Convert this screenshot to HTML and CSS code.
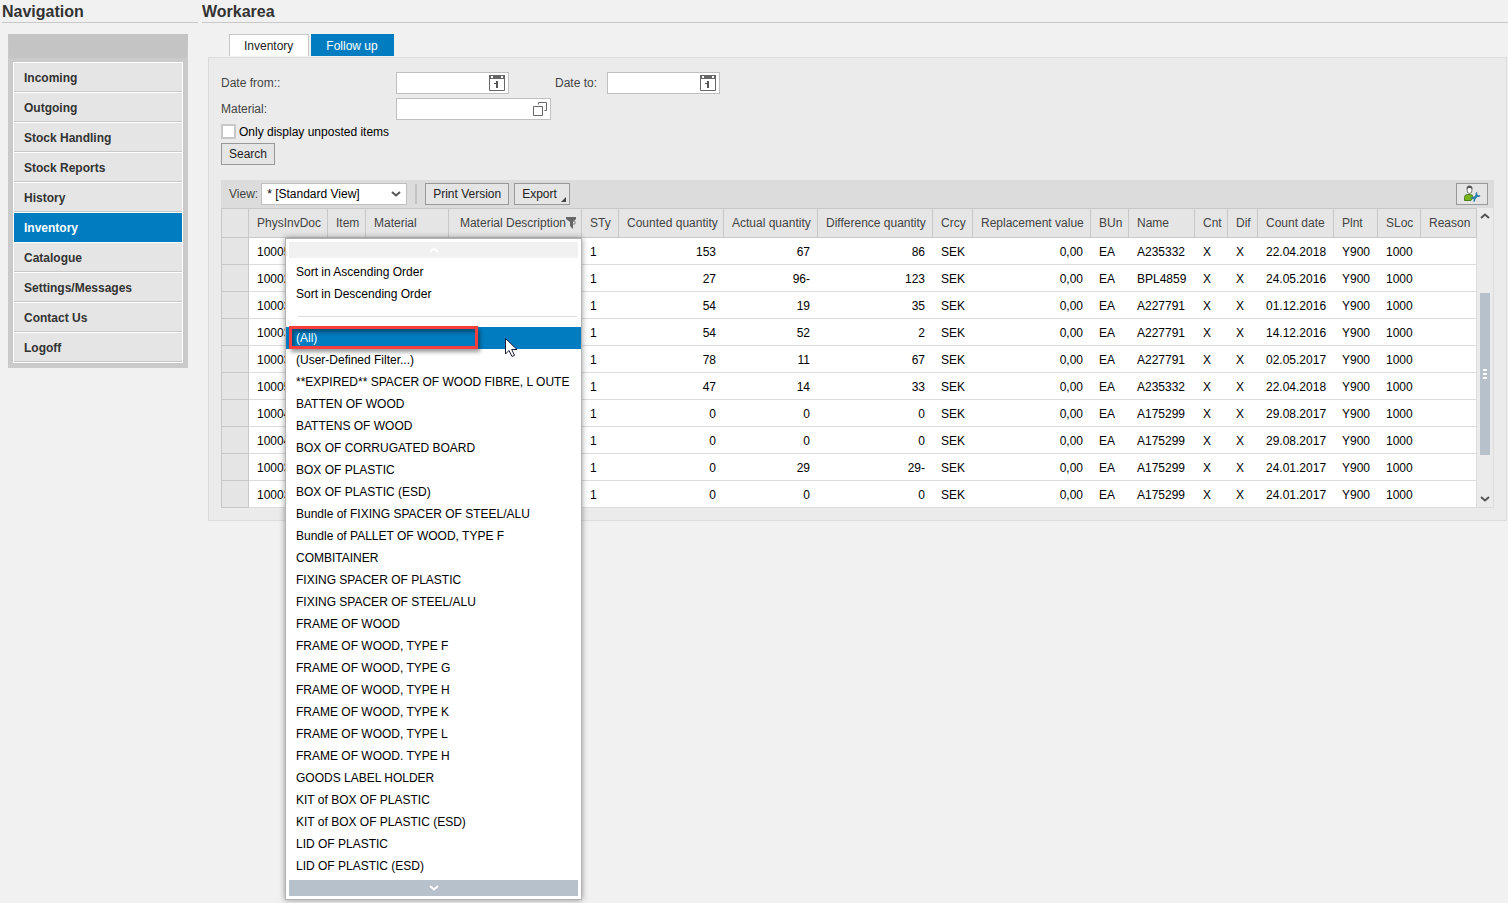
FILE: index.html
```html
<!DOCTYPE html>
<html lang="en">
<head>
<meta charset="UTF-8" />
<title>Inventory - Follow up</title>
<link rel="stylesheet" href="styles.css">
</head>
<body>
<div class="page">

<aside class="sidebar">
  <h2>Navigation</h2>
  <nav class="nav-box">
    <ul>
      <li><a href="#">Incoming</a></li>
      <li><a href="#">Outgoing</a></li>
      <li><a href="#">Stock Handling</a></li>
      <li><a href="#">Stock Reports</a></li>
      <li><a href="#">History</a></li>
      <li class="active"><a href="#">Inventory</a></li>
      <li><a href="#">Catalogue</a></li>
      <li><a href="#">Settings/Messages</a></li>
      <li><a href="#">Contact Us</a></li>
      <li><a href="#">Logoff</a></li>
    </ul>
  </nav>
</aside>

<main class="workarea">
  <h2>Workarea</h2>

  <div class="tabs">
    <button type="button" class="tab">Inventory</button>
    <button type="button" class="tab selected">Follow up</button>
  </div>

  <div class="panel">
    <!-- Search form -->
    <form class="search" onsubmit="return false;">
      <div class="fields">
        <label for="dateFrom">Date from::</label>
        <div class="field date">
          <input type="text" id="dateFrom">
          <svg width="16" height="16" viewBox="0 0 16 16"><path d="M.5 .5h15v15H.5z" fill="#fff" stroke="#666"/><path d="M0 0h16v4H0z" fill="#666"/><path d="M2 1h2v2H2zM12 1h2v2h-2z" fill="#fff"/><path d="M7 6h2v7H7zM5 8h2v1H5z" fill="#555"/></svg>
        </div>
        <label for="dateTo">Date to:</label>
        <div class="field date">
          <input type="text" id="dateTo">
          <svg width="16" height="16" viewBox="0 0 16 16"><path d="M.5 .5h15v15H.5z" fill="#fff" stroke="#666"/><path d="M0 0h16v4H0z" fill="#666"/><path d="M2 1h2v2H2zM12 1h2v2h-2z" fill="#fff"/><path d="M7 6h2v7H7zM5 8h2v1H5z" fill="#555"/></svg>
        </div>
        <label for="material">Material:</label>
        <div class="field wide">
          <input type="text" id="material">
          <svg width="16" height="16" viewBox="0 0 16 16"><path d="M1.500 5.500h9v9h-9zM6.500 3.500v-2h8v8h-2" fill="none" stroke="#666"/></svg>
        </div>
      </div>
      <div class="check">
        <input type="checkbox" id="unposted">
        <label for="unposted">Only display unposted items</label>
      </div>
      <button type="submit" class="btn">Search</button>
    </form>

    <!-- Table toolbar -->
    <div class="toolbar">
      <label for="view">View:</label>
      <div class="view-select">
        <select id="view"><option>* [Standard View]</option></select>
        <svg width="10" height="6" viewBox="0 0 10 6"><path d="M1 1l4 3.500L9 1" fill="none" stroke="#555" stroke-width="2"/></svg>
      </div>
      <span class="divider"></span>
      <button type="button" class="btn">Print Version</button>
      <button type="button" class="btn export">Export<svg width="5" height="5" viewBox="0 0 5 5"><path d="M5 0v5H0z" fill="#444"/></svg></button>
      <button type="button" class="btn settings" aria-label="Settings">
        <svg width="18" height="18" viewBox="0 0 18 18">
          <path d="M1.500 15.500v-3q0-3 3-3h3q2.500 0 2.500 3l-2 3z" fill="#79b51c" stroke="#4a7f1b"/>
          <ellipse cx="6.500" cy="5" rx="2.500" ry="3.500" fill="#fff" stroke="#777"/>
          <path d="M3.500 4q0-3.500 3-3.500t3 3.500q-3-2-6 0z" fill="#555"/>
          <path d="M10.500 14l4-4" stroke="#2d7fae" stroke-width="2.500"/>
          <path d="M14 7.500a2 2 0 1 0 3 3M8 13.500a2 2 0 1 1 2.500 3" fill="none" stroke="#2d7fae" stroke-width="1.500"/>
        </svg>
      </button>
    </div>

    <div class="grid">
      <table>
        <colgroup>
          <col class="w-sel"><col class="w-doc"><col class="w-item"><col class="w-mat"><col class="w-desc">
          <col class="w-sty"><col class="w-counted"><col class="w-actual"><col class="w-diff"><col class="w-crcy">
          <col class="w-value"><col class="w-bun"><col class="w-name"><col class="w-cnt"><col class="w-dif">
          <col class="w-date"><col class="w-plnt"><col class="w-sloc"><col>
        </colgroup>
        <thead>
          <tr>
            <th></th><th>PhysInvDoc</th><th>Item</th><th>Material</th>
            <th class="filtered">
              <div class="head">Material Description<svg width="10" height="12" viewBox="0 0 10 12"><path d="M0 0h10v2L7 5v7L4 9V5L0 2z" fill="#666"/><path d="M7 4h2v3H7" fill="none" stroke="#888"/></svg></div>
              <!-- Filter menu -->
              <div class="menu">
                <button type="button" class="scroll up" aria-label="Scroll up"><svg width="10" height="6" viewBox="0 0 10 6"><path d="M1 5l4-3.500L9 5" fill="none" stroke="#fff" stroke-width="2"/></svg></button>
                <ul>
                  <li><button type="button">Sort in Ascending Order</button></li>
                  <li><button type="button">Sort in Descending Order</button></li>
                </ul>
                <hr>
                <ul>
                  <li class="current">
                    <button type="button">(All)</button>
                    <span class="marker"></span>
                    <svg class="pointer" width="13" height="20" viewBox="0 0 13 20"><path d="M.5 .5v15.500l3.500-3.500L7 18.500l2.500-1.200-2.800-5.800H12z" fill="#fff" stroke="#1b1b3a"/></svg>
                  </li>
                  <li><button type="button">(User-Defined Filter...)</button></li>
                  <li><button type="button">**EXPIRED** SPACER OF WOOD FIBRE, L OUTE</button></li>
                  <li><button type="button">BATTEN OF WOOD</button></li>
                  <li><button type="button">BATTENS OF WOOD</button></li>
                  <li><button type="button">BOX OF CORRUGATED BOARD</button></li>
                  <li><button type="button">BOX OF PLASTIC</button></li>
                  <li><button type="button">BOX OF PLASTIC (ESD)</button></li>
                  <li><button type="button">Bundle of FIXING SPACER OF STEEL/ALU</button></li>
                  <li><button type="button">Bundle of PALLET OF WOOD, TYPE F</button></li>
                  <li><button type="button">COMBITAINER</button></li>
                  <li><button type="button">FIXING SPACER OF PLASTIC</button></li>
                  <li><button type="button">FIXING SPACER OF STEEL/ALU</button></li>
                  <li><button type="button">FRAME OF WOOD</button></li>
                  <li><button type="button">FRAME OF WOOD, TYPE F</button></li>
                  <li><button type="button">FRAME OF WOOD, TYPE G</button></li>
                  <li><button type="button">FRAME OF WOOD, TYPE H</button></li>
                  <li><button type="button">FRAME OF WOOD, TYPE K</button></li>
                  <li><button type="button">FRAME OF WOOD, TYPE L</button></li>
                  <li><button type="button">FRAME OF WOOD. TYPE H</button></li>
                  <li><button type="button">GOODS LABEL HOLDER</button></li>
                  <li><button type="button">KIT of BOX OF PLASTIC</button></li>
                  <li><button type="button">KIT of BOX OF PLASTIC (ESD)</button></li>
                  <li><button type="button">LID OF PLASTIC</button></li>
                  <li><button type="button">LID OF PLASTIC (ESD)</button></li>
                </ul>
                <button type="button" class="scroll down" aria-label="Scroll down"><svg width="10" height="6" viewBox="0 0 10 6"><path d="M1 1l4 3.500L9 1" fill="none" stroke="#fff" stroke-width="2"/></svg></button>
              </div>
            </th>
            <th>STy</th><th>Counted quantity</th><th>Actual quantity</th><th>Difference quantity</th><th>Crcy</th>
            <th>Replacement value</th><th>BUn</th><th>Name</th><th>Cnt</th><th>Dif</th>
            <th>Count date</th><th>Plnt</th><th>SLoc</th><th>Reason</th>
          </tr>
        </thead>
        <tbody>
          <tr><td></td><td>10005</td><td></td><td></td><td></td><td>1</td><td class="num">153</td><td class="num">67</td><td class="num">86</td><td>SEK</td><td class="num">0,00</td><td>EA</td><td>A235332</td><td>X</td><td>X</td><td>22.04.2018</td><td>Y900</td><td>1000</td><td></td></tr>
          <tr><td></td><td>10002</td><td></td><td></td><td></td><td>1</td><td class="num">27</td><td class="num">96-</td><td class="num">123</td><td>SEK</td><td class="num">0,00</td><td>EA</td><td>BPL4859</td><td>X</td><td>X</td><td>24.05.2016</td><td>Y900</td><td>1000</td><td></td></tr>
          <tr><td></td><td>10003</td><td></td><td></td><td></td><td>1</td><td class="num">54</td><td class="num">19</td><td class="num">35</td><td>SEK</td><td class="num">0,00</td><td>EA</td><td>A227791</td><td>X</td><td>X</td><td>01.12.2016</td><td>Y900</td><td>1000</td><td></td></tr>
          <tr><td></td><td>10003</td><td></td><td></td><td></td><td>1</td><td class="num">54</td><td class="num">52</td><td class="num">2</td><td>SEK</td><td class="num">0,00</td><td>EA</td><td>A227791</td><td>X</td><td>X</td><td>14.12.2016</td><td>Y900</td><td>1000</td><td></td></tr>
          <tr><td></td><td>10003</td><td></td><td></td><td></td><td>1</td><td class="num">78</td><td class="num">11</td><td class="num">67</td><td>SEK</td><td class="num">0,00</td><td>EA</td><td>A227791</td><td>X</td><td>X</td><td>02.05.2017</td><td>Y900</td><td>1000</td><td></td></tr>
          <tr><td></td><td>10005</td><td></td><td></td><td></td><td>1</td><td class="num">47</td><td class="num">14</td><td class="num">33</td><td>SEK</td><td class="num">0,00</td><td>EA</td><td>A235332</td><td>X</td><td>X</td><td>22.04.2018</td><td>Y900</td><td>1000</td><td></td></tr>
          <tr><td></td><td>10004</td><td></td><td></td><td></td><td>1</td><td class="num">0</td><td class="num">0</td><td class="num">0</td><td>SEK</td><td class="num">0,00</td><td>EA</td><td>A175299</td><td>X</td><td>X</td><td>29.08.2017</td><td>Y900</td><td>1000</td><td></td></tr>
          <tr><td></td><td>10004</td><td></td><td></td><td></td><td>1</td><td class="num">0</td><td class="num">0</td><td class="num">0</td><td>SEK</td><td class="num">0,00</td><td>EA</td><td>A175299</td><td>X</td><td>X</td><td>29.08.2017</td><td>Y900</td><td>1000</td><td></td></tr>
          <tr><td></td><td>10003</td><td></td><td></td><td></td><td>1</td><td class="num">0</td><td class="num">29</td><td class="num">29-</td><td>SEK</td><td class="num">0,00</td><td>EA</td><td>A175299</td><td>X</td><td>X</td><td>24.01.2017</td><td>Y900</td><td>1000</td><td></td></tr>
          <tr><td></td><td>10003</td><td></td><td></td><td></td><td>1</td><td class="num">0</td><td class="num">0</td><td class="num">0</td><td>SEK</td><td class="num">0,00</td><td>EA</td><td>A175299</td><td>X</td><td>X</td><td>24.01.2017</td><td>Y900</td><td>1000</td><td></td></tr>
        </tbody>
      </table>

      <div class="scrollbar">
        <svg width="10" height="6" viewBox="0 0 10 6"><path d="M1 5l4-3.500L9 5" fill="none" stroke="#555" stroke-width="2"/></svg>
        <div class="track"><div class="thumb"><i></i><i></i><i></i></div></div>
        <svg width="10" height="6" viewBox="0 0 10 6"><path d="M1 1l4 3.500L9 1" fill="none" stroke="#555" stroke-width="2"/></svg>
      </div>
    </div>
  </div>
</main>

</div>
</body>
</html>
```

FILE: styles.css
```css
* {
  box-sizing: border-box;
}
body {
  margin: 0;
  background: #f1f1f1;
  color: #000;
  font-family: "Liberation Sans", Arial, sans-serif;
  font-size: 12px;
  line-height: 16px;
}
button, input, select {
  font: inherit;
}
ul {
  list-style: none;
  margin: 0;
  padding: 0;
}
.page {
  display: flex;
  align-items: flex-start;
  min-height: 100vh;
}
h2 {
  margin: 0;
  height: 23px;
  border-bottom: 1px solid #c8c8c8;
  font-size: 16px;
  line-height: 24px;
  color: #333;
}

/* Navigation */
.sidebar {
  flex: 0 0 202px;
  padding: 0 4px 0 2px;
}
.nav-box {
  margin: 11px 10px 0 6px;
  padding: 4px 4px 4px;
  border: 1px solid #cacaca;
  border-top: 24px solid #c4c4c4;
  background: #cacaca;
}
.nav-box ul {
  border: 1px solid #fff;
  border-top: 0;
}
.nav-box a {
  display: block;
  padding: 7px 10px 5px;
  border-top: 1px solid #fff;
  border-bottom: 1px solid #c8c8c8;
  background: #e5e5e5;
  color: #333;
  font-weight: bold;
  text-decoration: none;
}
.nav-box .active a {
  background: #007cc0;
  border-bottom-color: #007cc0;
  color: #fff;
}

/* Workarea */
.workarea {
  flex: 1;
  min-width: 0;
}
.tabs {
  display: flex;
  gap: 2px;
  margin: 11px 0 0 27px;
}
.tab {
  height: 22px;
  padding: 0 15px 0 14px;
  border: 1px solid #c8c8c8;
  border-bottom: 0;
  background: #fff;
  color: #222;
}
.tab.selected {
  background: #007cc0;
  border-color: #007cc0;
  color: #fff;
}
.panel {
  margin: 1px 1px 0 6px;
  padding: 14px 12px 12px;
  border: 1px solid #dcdcdc;
  background: #ebebeb;
}
.search {
  padding-bottom: 15px;
}
.fields {
  display: grid;
  grid-template-columns: 175px 159px 52px 1fr;
  gap: 4px 0;
  align-items: center;
  color: #444;
}
.field {
  display: flex;
  align-items: center;
  height: 22px;
  padding-right: 3px;
  border: 1px solid #bfbfbf;
  background: #fff;
}
.field.date {
  width: 113px;
}
.field.wide {
  width: 155px;
  padding-right: 2px;
}
.field input {
  flex: 1;
  min-width: 0;
  border: 0;
  background: none;
}
.check {
  display: flex;
  align-items: center;
  gap: 3px;
  height: 15px;
  margin: 4px 0;
}
.check input {
  appearance: none;
  width: 15px;
  height: 15px;
  margin: 0;
  border: 2px solid #c8c8c8;
  background: #fff;
}
.btn {
  height: 22px;
  padding: 0 7px;
  border: 1px solid #999;
  background: #e5e5e5;
  color: #222;
  white-space: nowrap;
}

/* Toolbar */
.toolbar {
  display: flex;
  align-items: center;
  height: 28px;
  padding: 0 6px 0 8px;
  background: #dcdcdc;
  color: #444;
}
.view-select {
  position: relative;
  width: 146px;
  margin-left: 3px;
}
.view-select select {
  appearance: none;
  display: block;
  width: 100%;
  height: 22px;
  padding: 0 5px;
  border: 1px solid #bfbfbf;
  border-radius: 0;
  background: #fff;
  color: #000;
}
.view-select svg {
  position: absolute;
  right: 6px;
  top: 8px;
}
.divider {
  width: 2px;
  height: 20px;
  margin: 0 8px;
  background: #c4c4c4;
}
.export {
  position: relative;
  margin-left: 5px;
  padding-right: 12px;
}
.export svg {
  position: absolute;
  right: 3px;
  bottom: 2px;
}
.settings {
  width: 32px;
  margin-left: auto;
  padding: 1px 6px;
}
.settings svg {
  display: block;
}

/* Table */
.grid {
  display: flex;
}
table {
  flex: 1;
  width: 100%;
  table-layout: fixed;
  border-spacing: 0;
  border-left: 1px solid #c8c8c8;
  border-top: 1px solid #c8c8c8;
}
th {
  height: 29px;
  padding: 0 0 0 8px;
  border-right: 1px solid #c8c8c8;
  border-bottom: 1px solid #c8c8c8;
  background: #e5e5e5;
  color: #444;
  font-weight: normal;
  text-align: left;
  white-space: nowrap;
}
td {
  height: 27px;
  padding: 2px 7px 0 8px;
  border-bottom: 1px solid #dcdcdc;
  background: #fff;
  white-space: nowrap;
}
td:first-child {
  border-right: 1px solid #c8c8c8;
  border-bottom-color: #c8c8c8;
  background: #e5e5e5;
}
td:last-child {
  border-right: 1px solid #dcdcdc;
}
.num {
  text-align: right;
  padding-right: 8px;
}
.w-sel { width: 27px; }
.w-doc { width: 79px; }
.w-item { width: 38px; }
.w-mat { width: 83px; }
.w-desc { width: 133px; }
.w-sty { width: 37px; }
.w-counted { width: 105px; }
.w-actual { width: 94px; }
.w-diff { width: 115px; }
.w-crcy { width: 40px; }
.w-value { width: 118px; }
.w-bun { width: 38px; }
.w-name { width: 66px; }
.w-cnt { width: 33px; }
.w-dif { width: 30px; }
.w-date { width: 76px; }
.w-plnt { width: 44px; }
.w-sloc { width: 43px; }
.filtered {
  position: relative;
}
.head {
  display: flex;
  align-items: center;
  justify-content: flex-end;
  padding-right: 5px;
}

/* Scrollbar */
.scrollbar {
  flex: 0 0 17px;
  display: flex;
  flex-direction: column;
  align-items: center;
  padding: 5px 0;
  border-right: 1px solid #dcdcdc;
  border-bottom: 1px solid #dcdcdc;
}
.track {
  flex: 1;
  display: grid;
  grid-template-rows: 74fr 162fr 41fr;
}
.thumb {
  grid-row: 2;
  display: flex;
  flex-direction: column;
  align-items: center;
  justify-content: center;
  gap: 2px;
  width: 10px;
  background: #b7c1cc;
}
.thumb i {
  width: 4px;
  height: 2px;
  background: #fff;
}

/* Filter menu */
.menu {
  position: absolute;
  top: 100%;
  right: -1px;
  z-index: 5;
  width: 297px;
  margin-top: 1px;
  padding: 3px 0;
  border: 1px solid #b4b4b4;
  background: #fff;
  box-shadow: 0 0 6px rgba(0, 0, 0, 0.4);
  color: #000;
}
.menu .scroll {
  display: flex;
  align-items: center;
  justify-content: center;
  width: calc(100% - 6px);
  height: 16px;
  margin: 0 3px;
  padding: 0;
  border: 0;
}
.menu .up {
  margin-bottom: 3px;
  background: #f1f1f1;
}
.menu .down {
  margin-top: 3px;
  background: #b7c1cc;
}
.menu li button {
  display: block;
  width: 100%;
  height: 22px;
  padding: 0 10px;
  border: 0;
  background: none;
  color: #000;
  text-align: left;
}
.menu hr {
  margin: 11px 4px 10px 12px;
  border: 0;
  border-top: 1px solid #dcdcdc;
}
.menu .current {
  position: relative;
  background: #007cc0;
}
.menu .current button {
  color: #fff;
}
.marker {
  position: absolute;
  left: 3px;
  top: -1px;
  width: 189px;
  height: 23px;
  border: 3px solid #f93e3e;
  box-shadow: 2px 3px 4px rgba(0, 0, 0, 0.4), inset 2px 3px 4px rgba(0, 0, 0, 0.4);
}
.pointer {
  position: absolute;
  left: 219px;
  top: 11px;
  z-index: 1;
}
```
